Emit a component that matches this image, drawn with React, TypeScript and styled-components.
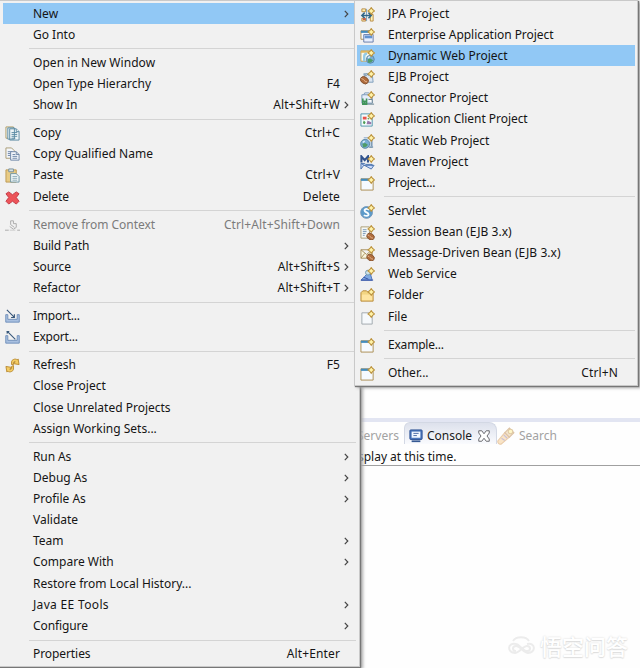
import React from "react";
import styled, { createGlobalStyle } from "styled-components";

const GlobalStyle = createGlobalStyle`
  html, body { margin: 0; overflow: hidden; background: #fff; }
  * { box-sizing: border-box; }
`;

const Desktop = styled.main`
  position: relative;
  width: 640px;
  height: 668px;
  overflow: hidden;
  background: #fefefe;
  color: #151515;
  font: 12px/20px "Noto Sans", "Noto Sans CJK SC", sans-serif;
  white-space: pre;
`;

const Workbench = styled.section`
  display: flex;
  flex-direction: column;
  height: 668px;
  padding: 418px 0 0 357px;
`;
const Sash = styled.div`
  height: 4px;
  background: #e2e5f2;
`;
const TabBar = styled.nav`
  display: flex;
  height: 22px;
  align-items: stretch;
  color: #a2a2a2;
`;
const Tab = styled.div<{ $width: number; $active?: boolean }>`
  display: flex;
  align-items: center;
  gap: 4px;
  width: ${(p) => p.$width}px;
  padding-top: ${(p) => (p.$active ? 4 : 5)}px;
  padding-left: ${(p) => (p.$active ? 4 : 0)}px;
  color: ${(p) => (p.$active ? "#1b1b22" : "#a2a2a2")};
  border: solid #d3d8e4;
  border-width: ${(p) => (p.$active ? "1px 1px 0" : "0")};
  border-radius: 6px 8px 0 0;
  background: ${(p) => (p.$active ? "linear-gradient(#dde1ec, #fafbfe)" : "transparent")};
`;
const TabLabel = styled.span<{ $after?: number }>`
  margin-right: ${(p) => p.$after ?? 0}px;
`;
const Message = styled.p`
  height: 22px;
  margin: 0;
  padding: 3px 0 0 1px;
  letter-spacing: -0.02px;
  border-bottom: 1px solid #a0a0a0;
`;

const Menu = styled.div`
  position: absolute;
  top: 0;
  background: #f1f1f1;
  border: 1px solid #c9c9c9;
`;
const ContextMenu = styled(Menu)`
  left: -1px;
  width: 361px;
  height: 667px;
  padding: 2px 2px 0;
  box-shadow: 1px 1px 1px #777, 3px 2px 3px #aaa;
`;
const SubMenu = styled(Menu)`
  left: 354px;
  width: 284px;
  height: 386px;
  padding: 2px 2px 0;
  box-shadow: 1px 1px 1px #777, 3px 2px 3px #aaa;
`;
const Row = styled.div<{ $selected?: boolean; $disabled?: boolean; $sub?: boolean }>`
  display: grid;
  grid-template-columns: ${(p) => (p.$sub ? "31px 1fr auto 17px" : "30px 1fr auto 14px")};
  align-items: center;
  height: 21.16px;
  margin-left: ${(p) => (p.$sub ? 0 : 1)}px;
  margin-right: ${(p) => (p.$sub ? 0 : 3)}px;
  color: ${(p) => (p.$disabled ? "#7b7b7b" : "#151515")};
  background: ${(p) => (p.$selected ? "#91c8f5" : "transparent")};
`;
const Text = styled.span<{ $spacing?: number }>`
  letter-spacing: ${(p) => p.$spacing ?? 0}px;
`;
const IconCell = styled.span<{ $sub?: boolean }>`
  display: flex;
  padding-left: ${(p) => (p.$sub ? 3 : 2)}px;
  padding-top: 1px;
`;
const Arrow = styled.span`
  display: flex;
  padding-left: 4px;
`;
const Rule = styled.div<{ $sub?: boolean }>`
  height: 1px;
  margin: ${(p) => (p.$sub ? "3px 0 2.87px 27px" : "3px 1px 2.87px 27px")};
  background: #d4d4d4;
`;
const Watermark = styled.div`
  position: absolute;
  right: 12px;
  bottom: 11px;
  display: flex;
  align-items: center;
  gap: 5px;
  color: #fff;
  font: 500 22px/24px "Noto Sans CJK SC", sans-serif;
  text-shadow: 0 0 2px #d4d4d4, 0 1px 1px #e2e2e2;
`;

const Spark = () => (
  <path d="m12 .6 1.5 2.1 2 1.5-2 1.5L12 7.8l-1.5-2.1-2-1.5 2-1.5Z" fill="#fff3a8" stroke="#bd9440" strokeWidth="1.1" />
);
const Frame = ({ x = 1, y = 4, w = 12, h = 10 }) => (
  <g>
    <path d={`M${x} ${y}h${w}v${h}h-${w}z`} fill="#f6faff" stroke="#ab8d50" />
    <path d={`M${x} ${y + 1}h${w}`} stroke="#438bbc" strokeWidth="2.4" />
  </g>
);
const Bean = () => (
  <g>
    <ellipse cx="9.7" cy="11" rx="5" ry="3.9" fill="#b06c3c" stroke="#80502f" transform="rotate(35 9.7 11)" />
    <path d="M6 9c3 0 3 4 7 4" fill="none" stroke="#eec09a" />
  </g>
);
const Globe = ({ cx = 10, cy = 10.5, r = 4.5 }) => (
  <g>
    <circle cx={cx} cy={cy} r={r} fill="#79aed4" stroke="#5d87a4" />
    <path d={`M${cx - 3} ${cy}l3-1 3 2-2 2-3 1z`} fill="#4f9c68" />
    <path d={`M${cx - 2.5} ${cy - 1.5}l2-1.5`} stroke="#e4f3fb" strokeWidth="1.5" />
  </g>
);

const drawings: Record<string, React.ReactNode> = {
  copy: (
    <g fill="#edf4f6" stroke="#5b8ba3">
      <path d="M1 1h8v12H1z" stroke="#af9b62" />
      <path d="M3 2h7v12H3zM5 3h7l3 3v9H5z" />
      <path d="M12 3v3h3M7 7h6M7 9h6M7 11h6M7 13h4" />
    </g>
  ),
  qualified: (
    <g fill="#f3f6fb" stroke="#6c84a5">
      <path d="M1 1h6l3 3v8H1z" stroke="#aa9b72" />
      <path d="M3 5h5M3 7h4M3 9h4" />
      <path d="M6 5h6l3 3v6H6zM12 5v3h3M8 8h3M8 10h5M8 12h5" />
    </g>
  ),
  paste: (
    <g>
      <path d="M1 2h11v13H1z" fill="#e8cb84" stroke="#bd9a54" />
      <path d="M4 1h5v3H4z" fill="#d7e1e6" stroke="#78909b" />
      <path d="M6 6h6l3 3v6H6z" fill="#eff6f7" stroke="#6d94a5" />
      <path d="M8 9h5M8 11h5M8 13h5" stroke="#8eabb8" />
    </g>
  ),
  delete: <path d="m1 4 3-2 4 3 4-3 3 2-3 4 3 4-3 3-4-3-4 3-3-3 3-4z" fill="#ec5459" stroke="#c33a45" strokeLinejoin="round" />,
  remove: (
    <g fill="none" stroke="#aaa">
      <path d="M0 13h4M13 13h3M6 3h3v3h3v4L9 12l-4-3M6 3v4m0 0 4 3" />
      <path d="M5 13h6" stroke="#ccc" />
    </g>
  ),
  import: (
    <g fill="none">
      <path d="M.8 6H3v5h10V6h2.2v8H.8z" fill="#a9c0e0" stroke="#7190bb" />
      <path d="m2 1 8 8M6.500 9H10V5.500" stroke="#37577a" strokeWidth="1.2" />
    </g>
  ),
  export: (
    <g fill="none">
      <path d="M.8 6H3v5h10V6h2.2v8H.8z" fill="#a9c0e0" stroke="#7190bb" />
      <path d="m3 2 8 8" stroke="#37577a" strokeWidth="1.2" />
      <path d="M1.500 1H5L2 4.500z" fill="#37577a" />
    </g>
  ),
  refresh: (
    <g fill="#f4cc63" stroke="#b98a32">
      <path d="M7 7V4c0-2 4-4 6-2l1-1 1 6-6-1 2-2c-2-1-2 1-2 3z" />
      <path d="M9 8v4c0 2-4 4-6 2l-1 1-1-6 6 1-2 2c2 1 2-1 2-3z" />
    </g>
  ),
  jpa: (
    <g>
      <path d="M2 2h4v3H2zM2 12h4v3H2zM11 8h3v7h-3z" fill="#fff4b8" stroke="#b78b42" />
      <path d="M7 2v13" stroke="#799fb9" />
      <path d="M2 9h10M5 6 2 9l3 3m4-6 3 3-3 3" fill="none" stroke="#316788" strokeWidth="1.6" />
      <path d="M3 12h3v2H3z" fill="#cc584d" />
      <Spark />
    </g>
  ),
  enterprise: (
    <g>
      <Frame x={1} y={3} w={11} h={9} />
      <path d="M4 7h10v8H4z" fill="#e8effd" stroke="#657ca9" />
      <path d="M5 8h8v3H5z" fill="#6293d0" />
      <Spark />
    </g>
  ),
  dynamic: (
    <g>
      <path d="M1 2h12v11H1z" fill="#f7faf2" stroke="#c7a45a" />
      <path d="M1 3h10" stroke="#dfb65d" strokeWidth="2" />
      <path d="M4.500 13V8c0-2 1-3 3-3" fill="none" stroke="#91c9e4" strokeWidth="2.5" />
      <Globe cx={11} cy={11} r={4.2} />
      <Spark />
    </g>
  ),
  ejb: (
    <g>
      <path d="M4 4h9l1 9H7z" fill="#dbe5f0" stroke="#7d9dbb" />
      <g transform="translate(-4 1) scale(.9)"><Bean /></g>
      <path d="m7 4 2 2M5 5l2 1" stroke="#52708a" />
      <Spark />
    </g>
  ),
  connector: (
    <g>
      <path d="M2 4h11v9H2zM4 4l1-2h5" fill="#e4edfa" stroke="#7896b8" />
      <path d="M9 9h4v4M3 14h12" fill="#fff" stroke="#637e8e" />
      <path d="M3 8v3h4V8M5 11v4M3 11v3h4v-3" fill="none" stroke="#41945a" strokeWidth="1.7" />
      <Spark />
    </g>
  ),
  client: (
    <g>
      <path d="M1 2h12v13H1z" fill="#f6fcfd" stroke="#4d94ab" />
      <path d="M3 5h4v3H3z" fill="#e9524a" /><circle cx="9" cy="7" r="1" fill="#72a14d" />
      <path d="m7 13 1-4 4 2v2z" fill="#9777ab" />
      <path d="m3 12 1-3 2 2-1 2z" fill="#4e9c56" />
      <Spark />
    </g>
  ),
  static: (
    <g>
      <path d="M4 4h9v10H9" fill="#ddebf9" stroke="#8da9c7" />
      <Globe cx={5.5} cy={10.5} r={4.8} />
      <path d="M12 8v5m-2 1h4" stroke="#62839a" />
      <Spark />
    </g>
  ),
  maven: (
    <g>
      <path d="M1.500 8V1.500L5 5.500l3.500-4V8" fill="none" stroke="#31538d" strokeWidth="2.2" />
      <path d="M1 9h4l1 1h7v2M1 9v6l3-4h11l-3 4z" fill="#cadafb" stroke="#4a72ae" />
      <Spark />
    </g>
  ),
  project: <g><Frame x={1} y={3} w={13} h={12} /><Spark /></g>,
  servlet: (
    <g>
      <circle cx="7" cy="9" r="6.3" fill="#5b9aca" stroke="#7598b8" />
      <path d="M10 6c-5-2-7 1-3 3s2 5-3 3" fill="none" stroke="#f6fcff" strokeWidth="2" />
      <Spark />
    </g>
  ),
  session: (
    <g>
      <path d="M1 2h9v12H1z" fill="#f6f9f6" stroke="#ac9d72" />
      <path d="M3 5h4M3 7h4M3 9h3M3 11h2" stroke="#7898b8" />
      <g transform="translate(3 3) scale(.85)"><Bean /></g>
      <Spark />
    </g>
  ),
  message: (
    <g>
      <path d="M1 4h12v9H1zM1 4l6 5 6-5M1 13l4-5" fill="#f9f6df" stroke="#a8905d" />
      <g transform="translate(3 3) scale(.85)"><Bean /></g>
      <Spark />
    </g>
  ),
  service: (
    <g>
      <path d="m1 14 4-4 3-3h3l2 7z" fill="#7fa9e0" stroke="#486fbc" />
      <path d="M1 14h13M4 11l5 2" stroke="#3551a3" fill="none" />
      <circle cx="8.5" cy="6" r="2.6" fill="#cbe0e8" stroke="#6c98ad" />
      <Spark />
    </g>
  ),
  folder: (
    <g>
      <path d="M1 14V5l2-2h4l2 2h5v9z" fill="#f3d582" stroke="#b78a3c" />
      <path d="M2 7h11v6H2z" fill="#ffe5a1" />
      <Spark />
    </g>
  ),
  file: (
    <g><path d="M2 3h11v12H2z" fill="#f6f9fc" stroke="#a0a8ad" /><Spark /></g>
  ),
  console: (
    <g>
      <rect x="1" y="1" width="14" height="11" rx="1" fill="#4b76bb" stroke="#264b90" />
      <path d="M3 3h10v7H3z" fill="#f1f7ff" />
      <path d="M5 5h6M5 7.500h4" stroke="#3a5b9c" />
      <path d="M3 14h10" fill="none" stroke="#365993" strokeWidth="2" />
    </g>
  ),
  search: (
    <g>
      <path d="m1 12 6-7 4 4-7 6c-2 1-4-1-3-3Z" fill="#f9e4c6" stroke="#e9cba9" />
      <path d="m7 5 4-4 4 4-4 4Z" fill="#f2e3cf" stroke="#dcc2a5" />
      <circle cx="12" cy="4" r="2" fill="#fff7c8" stroke="#e0cba5" />
      <path d="m4 10 3 2M6 7l3 3" stroke="#c9bfd7" />
    </g>
  ),
  close: (
    <path d="M1 1h4l3 4 3-4h4v3l-3 4 3 4v3h-4l-3-4-3 4H1v-3l3-4-3-4z" fill="#fff" stroke="#5c5c62" strokeWidth="1.2" />
  ),
};

const Icon = ({ name, size = 14 }: { name: string; size?: number }) => (
  <svg width={size} height={size} viewBox="0 0 16 16" aria-hidden>{drawings[name]}</svg>
);
const Chevron = () => (
  <svg width="5" height="8" viewBox="0 0 5 8" aria-hidden>
    <path d="m.8.8 3 3.2-3 3.2" fill="none" stroke="#454545" strokeWidth="1.2" />
  </svg>
);

type Item = { label: string; icon?: string; keys?: string; more?: boolean; selected?: boolean; disabled?: boolean; spacing?: number };
const contextGroups: Item[][] = [
  [{ label: "New", more: true, selected: true }, { label: "Go Into" }],
  [
    { label: "Open in New Window", spacing: 0.04 },
    { label: "Open Type Hierarchy", keys: "F4" },
    { label: "Show In", keys: "Alt+Shift+W", more: true, spacing: -0.1 },
  ],
  [
    { label: "Copy", icon: "copy", keys: "Ctrl+C" },
    { label: "Copy Qualified Name", icon: "qualified", spacing: 0.04 },
    { label: "Paste", icon: "paste", keys: "Ctrl+V", spacing: -0.1 },
    { label: "Delete", icon: "delete", keys: "Delete", spacing: -0.1 },
  ],
  [
    { label: "Remove from Context", icon: "remove", keys: "Ctrl+Alt+Shift+Down", disabled: true, spacing: -0.03 },
    { label: "Build Path", more: true, spacing: -0.15 },
    { label: "Source", keys: "Alt+Shift+S", more: true, spacing: -0.1 },
    { label: "Refactor", keys: "Alt+Shift+T", more: true },
  ],
  [{ label: "Import...", icon: "import", spacing: -0.25 }, { label: "Export...", icon: "export", spacing: -0.2 }],
  [
    { label: "Refresh", icon: "refresh", keys: "F5" },
    { label: "Close Project" },
    { label: "Close Unrelated Projects" },
    { label: "Assign Working Sets..." },
  ],
  [
    { label: "Run As", more: true, spacing: -0.1 },
    { label: "Debug As", more: true },
    { label: "Profile As", more: true },
    { label: "Validate" },
    { label: "Team", more: true },
    { label: "Compare With", more: true },
    { label: "Restore from Local History..." },
    { label: "Java EE Tools", more: true, spacing: 0.33 },
    { label: "Configure", more: true, spacing: -0.1 },
  ],
  [{ label: "Properties", keys: "Alt+Enter", spacing: -0.08 }],
];
const newGroups: Item[][] = [
  [
    { label: "JPA Project", icon: "jpa", spacing: 0.15 },
    { label: "Enterprise Application Project", icon: "enterprise", spacing: -0.04 },
    { label: "Dynamic Web Project", icon: "dynamic", selected: true },
    { label: "EJB Project", icon: "ejb" },
    { label: "Connector Project", icon: "connector", spacing: -0.06 },
    { label: "Application Client Project", icon: "client", spacing: -0.05 },
    { label: "Static Web Project", icon: "static" },
    { label: "Maven Project", icon: "maven" },
    { label: "Project...", icon: "project", spacing: -0.15 },
  ],
  [
    { label: "Servlet", icon: "servlet", spacing: -0.1 },
    { label: "Session Bean (EJB 3.x)", icon: "session", spacing: 0.04 },
    { label: "Message-Driven Bean (EJB 3.x)", icon: "message", spacing: 0.05 },
    { label: "Web Service", icon: "service", spacing: 0.06 },
    { label: "Folder", icon: "folder" },
    { label: "File", icon: "file" },
  ],
  [{ label: "Example...", icon: "project", spacing: -0.2 }],
  [{ label: "Other...", icon: "project", keys: "Ctrl+N" }],
];

const MenuItems = ({ groups, sub }: { groups: Item[][]; sub?: boolean }) => (
  <>
    {groups.map((group, index) => (
      <React.Fragment key={index}>
        {index > 0 && <Rule $sub={sub} />}
        {group.map((item) => (
          <Row key={item.label} $sub={sub} $selected={item.selected} $disabled={item.disabled}>
            <IconCell $sub={sub}>{item.icon && <Icon name={item.icon} size={15} />}</IconCell>
            <Text $spacing={item.spacing}>{item.label}</Text>
            <Text $spacing={0.12}>{item.keys}</Text>
            <Arrow>{item.more && <Chevron />}</Arrow>
          </Row>
        ))}
      </React.Fragment>
    ))}
  </>
);

export default function App() {
  return (
    <Desktop>
      <GlobalStyle />
      <Workbench>
        <Sash />
        <TabBar>
          <Tab $width={47}>Servers</Tab>
          <Tab $width={93} $active>
            <Icon name="console" />
            <TabLabel $after={2}>Console</TabLabel>
            <Icon name="close" size={12} />
          </Tab>
          <Tab $width={80}>
            <Icon name="search" size={18} />
            <TabLabel>Search</TabLabel>
          </Tab>
        </TabBar>
        <Message>splay at this time.</Message>
      </Workbench>
      <Watermark>
        <svg width="27" height="24" viewBox="0 0 27 24" aria-hidden>
          <path d="M5 8c3-5 13-5 16 0M8 11c-9-2-9 9-1 9 4 0 8-7 12-7s4 5 0 5-8-7-11-7m11 0c9-2 9 9 1 9-4 0-8-7-12-7s-4 5 0 5" fill="none" stroke="#ececec" strokeWidth="2" />
        </svg>
        悟空问答
      </Watermark>
      <ContextMenu><MenuItems groups={contextGroups} /></ContextMenu>
      <SubMenu><MenuItems groups={newGroups} sub /></SubMenu>
    </Desktop>
  );
}
